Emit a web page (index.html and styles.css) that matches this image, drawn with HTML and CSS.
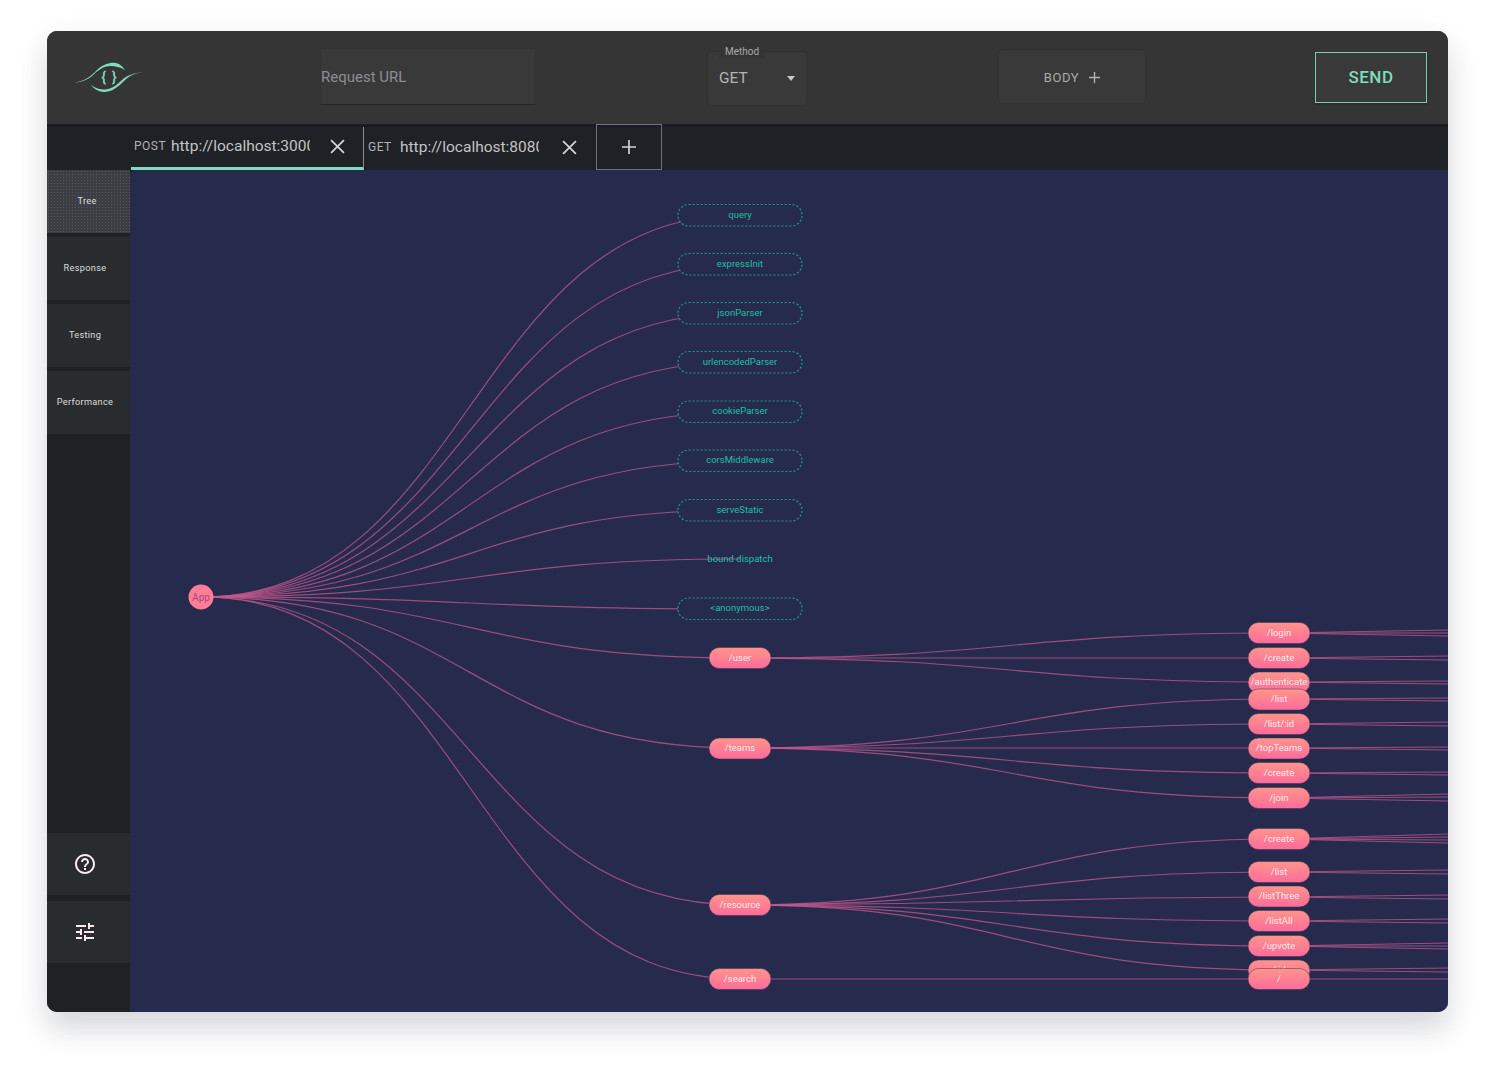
FILE: index.html
```html
<!DOCTYPE html>
<html lang="en">
<head>
<meta charset="utf-8">
<title>Request tree</title>
<link rel="stylesheet" href="styles.css">
</head>
<body>
<div class="window">
  <header class="topbar">
    <div class="logo-cell">
      <svg class="logo" viewBox="0 0 68 34" fill="none">
        <defs>
          <linearGradient id="logoLeft" x1="0" y1="0" x2="1" y2="0">
            <stop offset="0" stop-color="#8fa69e"/>
            <stop offset=".35" stop-color="#7fdcbc"/>
          </linearGradient>
          <linearGradient id="logoRight" x1="1" y1="0" x2="0" y2="0">
            <stop offset="0" stop-color="#8fa69e"/>
            <stop offset=".35" stop-color="#7fdcbc"/>
          </linearGradient>
        </defs>
        <path d="M0 22.500C10 21 16 16 22 10C28 4 36 2 41 3C45 4 48 7 50 10C45 7 40 6 36 6C28 6 22 11 17 16C12 20 6 22.500 0 22.500Z" fill="url(#logoLeft)"/>
        <path d="M68 12.500C58 13 53 17 48 22C42 28 36 32 29 32C24 32 19 29 16 25C20 28 25 29.500 29 29.500C36 29.500 42 25 47 20C52 15 60 12.500 68 12.500Z" fill="url(#logoRight)"/>
        <text x="34" y="22" class="logo-braces">{ }</text>
      </svg>
    </div>
    <div class="url-input">Request URL</div>
    <div class="method">
      <span class="method-label">Method</span>
      <span class="method-value">GET</span>
      <span class="method-arrow"></span>
    </div>
    <div class="body-btn">BODY
      <svg class="plus-small" viewBox="0 0 12 12"><path d="M6 0V12M0 6H12"/></svg>
    </div>
    <div class="send-btn">SEND</div>
  </header>

  <nav class="tabbar">
    <div class="tab tab-active">
      <span class="tab-method">POST</span>
      <span class="tab-url">http://localhost:3000</span>
      <svg class="tab-x" viewBox="0 0 14 14"><path d="M1 1L13 13M13 1L1 13"/></svg>
    </div>
    <div class="tab tab-second">
      <span class="tab-method">GET</span>
      <span class="tab-url">http://localhost:8080</span>
      <svg class="tab-x" viewBox="0 0 14 14"><path d="M1 1L13 13M13 1L1 13"/></svg>
    </div>
    <div class="tab-add">
      <svg class="plus-large" viewBox="0 0 14 14"><path d="M7 0V14M0 7H14"/></svg>
    </div>
  </nav>

  <div class="main">
    <aside class="sidebar">
      <div class="side-top">
        <div class="side-item side-active"><span>Tree</span></div>
        <div class="side-item"><span>Response</span></div>
        <div class="side-item"><span>Testing</span></div>
        <div class="side-item"><span>Performance</span></div>
      </div>
      <div class="side-bottom">
        <div class="side-item">
          <svg class="side-icon" viewBox="0 0 24 24"><path d="M11 18h2v-2h-2v2zm1-16C6.480 2 2 6.480 2 12s4.480 10 10 10 10-4.480 10-10S17.520 2 12 2zm0 18c-4.410 0-8-3.590-8-8s3.590-8 8-8 8 3.590 8 8-3.590 8-8 8zm0-14c-2.210 0-4 1.790-4 4h2c0-1.100.9-2 2-2s2 .9 2 2c0 2-3 1.750-3 5h2c0-2.250 3-2.500 3-5 0-2.210-1.790-4-4-4z"/></svg>
        </div>
        <div class="side-item">
          <svg class="side-icon" viewBox="0 0 24 24"><path d="M3 17v2h6v-2H3zM3 5v2h10V5H3zm10 16v-2h8v-2h-8v-2h-2v6h2zM7 9v2H3v2h4v2h2V9H7zm14 4v-2H11v2h10zm-6-4h2V7h4V5h-4V3h-2v6z"/></svg>
        </div>
      </div>
    </aside>

    <section class="canvas">
      <svg class="tree" viewBox="130 170 1318 842" preserveAspectRatio="xMinYMin slice">
        <defs>
          <linearGradient id="pink" x1="0" y1="0" x2="0" y2="1">
            <stop offset="0" stop-color="#ff958a"/>
            <stop offset="1" stop-color="#ff6b9b"/>
          </linearGradient>
        </defs>
        <g class="links">
          <path d="M201 597C470 597 470 215 740 215"/>
          <path d="M201 597C470 597 470 264 740 264"/>
          <path d="M201 597C470 597 470 313 740 313"/>
          <path d="M201 597C470 597 470 362 740 362"/>
          <path d="M201 597C470 597 470 412 740 412"/>
          <path d="M201 597C470 597 470 461 740 461"/>
          <path d="M201 597C470 597 470 510 740 510"/>
          <path d="M201 597C470 597 470 559 740 559"/>
          <path d="M201 597C470 597 470 609 740 609"/>
          <path d="M201 597C470 597 470 658 740 658"/>
          <path d="M201 597C470 597 470 748 740 748"/>
          <path d="M201 597C470 597 470 905 740 905"/>
          <path d="M201 597C470 597 470 979 740 979"/>

          <path d="M740 658C1010 658 1010 633 1279 633"/>
          <path d="M740 658C1010 658 1010 658 1279 658"/>
          <path d="M740 658C1010 658 1010 682 1279 682"/>

          <path d="M740 748C1010 748 1010 699 1279 699"/>
          <path d="M740 748C1010 748 1010 724 1279 724"/>
          <path d="M740 748C1010 748 1010 748 1279 748"/>
          <path d="M740 748C1010 748 1010 773 1279 773"/>
          <path d="M740 748C1010 748 1010 798 1279 798"/>

          <path d="M740 905C1010 905 1010 839 1279 839"/>
          <path d="M740 905C1010 905 1010 872 1279 872"/>
          <path d="M740 905C1010 905 1010 897 1279 897"/>
          <path d="M740 905C1010 905 1010 921 1279 921"/>
          <path d="M740 905C1010 905 1010 946 1279 946"/>
          <path d="M740 905C1010 905 1010 970 1279 970"/>
          <path d="M740 979C1010 979 1010 979 1279 979"/>

          <path d="M1279 633L1448 630"/><path d="M1279 633L1448 633"/><path d="M1279 633L1448 636"/>
          <path d="M1279 658L1448 656"/><path d="M1279 658L1448 660"/>
          <path d="M1279 682L1448 681"/><path d="M1279 682L1448 684"/>
          <path d="M1279 699L1448 698"/><path d="M1279 699L1448 701"/>
          <path d="M1279 724L1448 722"/><path d="M1279 724L1448 726"/>
          <path d="M1279 748L1448 747"/><path d="M1279 748L1448 750"/>
          <path d="M1279 773L1448 772"/><path d="M1279 773L1448 775"/>
          <path d="M1279 798L1448 794"/><path d="M1279 798L1448 797"/><path d="M1279 798L1448 801"/>
          <path d="M1279 839L1448 834"/><path d="M1279 839L1448 837"/><path d="M1279 839L1448 840"/><path d="M1279 839L1448 843"/>
          <path d="M1279 872L1448 870"/><path d="M1279 872L1448 874"/>
          <path d="M1279 897L1448 895"/><path d="M1279 897L1448 899"/>
          <path d="M1279 921L1448 919"/><path d="M1279 921L1448 923"/>
          <path d="M1279 946L1448 943"/><path d="M1279 946L1448 946"/><path d="M1279 946L1448 949"/>
          <path d="M1279 970L1448 968"/><path d="M1279 970L1448 972"/>
          <path d="M1279 979L1448 979"/>
        </g>

        <circle class="root" cx="201" cy="597" r="12.500"/>
        <text class="root-label" x="201" y="600.500">App</text>

        <g class="mw">
          <rect x="678" y="204.500" width="124" height="21.500" rx="10.700"/><text x="740" y="218.500">query</text>
          <rect x="678" y="253.500" width="124" height="21.500" rx="10.700"/><text x="740" y="267.500">expressInit</text>
          <rect x="678" y="302.500" width="124" height="21.500" rx="10.700"/><text x="740" y="316.500">jsonParser</text>
          <rect x="678" y="351.500" width="124" height="21.500" rx="10.700"/><text x="740" y="365.500">urlencodedParser</text>
          <rect x="678" y="401" width="124" height="21.500" rx="10.700"/><text x="740" y="415">cookieParser</text>
          <rect x="678" y="450" width="124" height="21.500" rx="10.700"/><text x="740" y="464">corsMiddleware</text>
          <rect x="678" y="499.500" width="124" height="21.500" rx="10.700"/><text x="740" y="513.500">serveStatic</text>
          <text x="740" y="562.500">bound dispatch</text>
          <rect x="678" y="598" width="124" height="21.500" rx="10.700"/><text x="740" y="612">&lt;anonymous&gt;</text>
        </g>

        <g class="route">
          <rect x="709" y="647.500" width="62" height="21" rx="10.500"/><text x="740" y="661.500">/user</text>
          <rect x="709" y="738" width="62" height="21" rx="10.500"/><text x="740" y="752">/teams</text>
          <rect x="709" y="894.500" width="62" height="21" rx="10.500"/><text x="740" y="908.500">/resource</text>
          <rect x="709" y="968.500" width="62" height="21" rx="10.500"/><text x="740" y="982.500">/search</text>

          <rect x="1248" y="622.500" width="62" height="21" rx="10.500"/><text x="1279" y="636.500">/login</text>
          <rect x="1248" y="647.500" width="62" height="21" rx="10.500"/><text x="1279" y="661.500">/create</text>
          <rect x="1248" y="672" width="62" height="21" rx="10.500"/><text x="1279" y="686">/authenticate</text>
          <rect x="1248" y="689" width="62" height="21" rx="10.500"/><text x="1279" y="703">/list</text>
          <rect x="1248" y="713.500" width="62" height="21" rx="10.500"/><text x="1279" y="727.500">/list/:id</text>
          <rect x="1248" y="738" width="62" height="21" rx="10.500"/><text x="1279" y="752">/topTeams</text>
          <rect x="1248" y="762.500" width="62" height="21" rx="10.500"/><text x="1279" y="776.500">/create</text>
          <rect x="1248" y="787.500" width="62" height="21" rx="10.500"/><text x="1279" y="801.500">/join</text>
          <rect x="1248" y="828.500" width="62" height="21" rx="10.500"/><text x="1279" y="842.500">/create</text>
          <rect x="1248" y="861.500" width="62" height="21" rx="10.500"/><text x="1279" y="875.500">/list</text>
          <rect x="1248" y="886" width="62" height="21" rx="10.500"/><text x="1279" y="900">/listThree</text>
          <rect x="1248" y="910.500" width="62" height="21" rx="10.500"/><text x="1279" y="924.500">/listAll</text>
          <rect x="1248" y="935.500" width="62" height="21" rx="10.500"/><text x="1279" y="949.500">/upvote</text>
          <rect x="1248" y="960" width="62" height="21" rx="10.500"/><text x="1279" y="974">/:id</text>
          <rect x="1248" y="968.500" width="62" height="21" rx="10.500"/><text x="1279" y="982.500">/</text>
        </g>
      </svg>
    </section>
  </div>
</div>
</body>
</html>
```

FILE: styles.css
```css
* { box-sizing: border-box; }
html, body { margin: 0; padding: 0; }
body {
  width: 1500px;
  height: 1084px;
  background: #fff;
  padding: 31px 52px 72px 47px;
  overflow: hidden;
  font-family: Roboto, "Liberation Sans", sans-serif;
}
.window {
  width: 1401px;
  height: 981px;
  display: flex;
  flex-direction: column;
  background: #1f2225;
  border-radius: 10px;
  overflow: hidden;
  box-shadow: 0 20px 28px rgba(40, 44, 60, .13), 0 8px 34px rgba(40, 44, 60, .07);
}
.topbar {
  height: 93px;
  flex: none;
  display: flex;
  align-items: center;
  background: #353535;
  position: relative;
}
.logo-cell { width: 274px; flex: none; padding-left: 28px; display: flex; }
.logo { width: 68px; height: 34px; margin-top: -2px; }
.logo-braces { font: 500 15px Roboto, sans-serif; fill: #7fdcbc; text-anchor: middle; word-spacing: 2px; }
.url-input {
  width: 214px;
  height: 55px;
  flex: none;
  margin-top: -2px;
  display: flex;
  align-items: center;
  background: #393939;
  color: #8d8d91;
  font-size: 15px;
  box-shadow: 0 1px 1px rgba(0, 0, 0, .25);
}
.method {
  width: 100px;
  height: 55px;
  flex: none;
  margin: 2px 0 0 172px;
  position: relative;
  background: #393939;
  border-radius: 4px;
  border: 1px solid #303030;
}
.method-label {
  position: absolute;
  left: 11px;
  top: -7px;
  padding: 0 6px;
  font-size: 10px;
  line-height: 14px;
  color: #a9a9a9;
  background: #353535;
}
.method-value {
  position: absolute;
  left: 11px;
  top: 17px;
  font-size: 15.500px;
  line-height: 19px;
  color: #b4b4b4;
}
.method-arrow {
  position: absolute;
  right: 11px;
  top: 24px;
  border-left: 4.500px solid transparent;
  border-right: 4.500px solid transparent;
  border-top: 5px solid #c6c6c6;
}
.body-btn {
  width: 148px;
  height: 55px;
  flex: none;
  margin: -2px 0 0 191px;
  padding-top: 2px;
  display: flex;
  align-items: center;
  justify-content: center;
  gap: 10px;
  background: #393939;
  border-radius: 4px;
  border: 1px solid #303030;
  color: #a9a9ad;
  font-size: 13px;
  letter-spacing: .6px;
}
.plus-small { width: 11px; height: 11px; fill: none; stroke: #b3b3b6; stroke-width: 1.500; }
.send-btn {
  width: 112px;
  height: 51px;
  flex: none;
  margin-left: 169px;
  padding-bottom: 2px;
  display: flex;
  align-items: center;
  justify-content: center;
  border: 1px solid #78cfb2;
  background: #393939;
  color: #7fdcbc;
  font-size: 17px;
  font-weight: 500;
  letter-spacing: .5px;
  box-shadow: 0 1px 2px rgba(0, 0, 0, .3);
}
.tabbar {
  height: 46px;
  flex: none;
  display: flex;
  background: #1e2125;
  border-top: 3px solid #1a1c20;
  padding-left: 84px;
}
.tab { height: 43px; display: flex; align-items: center; position: relative; color: #c3c3c3; }
.tab-active {
  width: 233px;
  padding: 0 0 2px 3px;
  border-bottom: 3px solid #7fdcbc;
  border-right: 1px solid #8a8d8f;
}
.tab-second { width: 232px; padding: 0 0 3px 4px; }
.tab-method { font-size: 12px; letter-spacing: .5px; color: #b2b2b2; width: 37px; flex: none; }
.tab-second .tab-method { width: 32px; }
.tab-url {
  width: 139px;
  flex: none;
  overflow: hidden;
  white-space: nowrap;
  font-size: 15.500px;
  color: #c4c4c4;
}
.tab-x { width: 15px; height: 15px; margin-left: 20px; fill: none; stroke: #d2d2d2; stroke-width: 1.700; }
.tab-second .tab-x { margin-left: 23px; }
.tab-add {
  width: 66px;
  height: 46px;
  flex: none;
  margin-top: -3px;
  display: flex;
  align-items: center;
  justify-content: center;
  border: 1px solid #6b7075;
  border-top-color: #75708a;
}
.plus-large { width: 14px; height: 14px; fill: none; stroke: #d2d2d2; stroke-width: 1.700; }
.main { flex: 1; display: flex; min-height: 0; }
.sidebar {
  width: 83px;
  flex: none;
  display: flex;
  flex-direction: column;
  justify-content: space-between;
  padding-bottom: 49px;
  background: #1f2225;
}
.side-top, .side-bottom { display: flex; flex-direction: column; gap: 4px; }
.side-bottom { gap: 6px; }
.side-item {
  height: 63px;
  padding-right: 7px;
  display: flex;
  align-items: center;
  justify-content: center;
  background: #292c2e;
  color: #dcdcdc;
  font-size: 9.200px;
  letter-spacing: .3px;
}
.side-top .side-item { padding-bottom: 2px; }
.side-bottom .side-item { height: 62px; }
.side-top .side-active {
  padding-right: 3px;
  background: #3d3e43;
  background-image: radial-gradient(#55565c 30%, transparent 35%);
  background-size: 3px 3px;
}
.side-icon { width: 24px; height: 24px; fill: #fbeaea; }
.canvas {
  flex: 1;
  min-width: 0;
  background: #262b4d;
  border-top-left-radius: 6px;
  overflow: hidden;
}
.tree { display: block; width: 1318px; height: 842px; }
.links path { fill: none; stroke: #c4588f; stroke-width: 1.200; stroke-opacity: .75; }
.root { fill: #ff7d96; }
.root-label { font: 10px Roboto, sans-serif; fill: #a7487f; text-anchor: middle; }
.mw rect { fill: #262b4d; stroke: #1f9a8c; stroke-width: 1.200; stroke-dasharray: 2 2; }
.mw text { font: 9.500px Roboto, sans-serif; fill: #1fbfa5; text-anchor: middle; transform: translateY(-1px); }
.route rect { fill: url(#pink); stroke: #3c3056; stroke-width: .5; }
.route text { font: 9.500px Roboto, sans-serif; fill: #ffeaec; text-anchor: middle; transform: translateY(-1px); }
```
